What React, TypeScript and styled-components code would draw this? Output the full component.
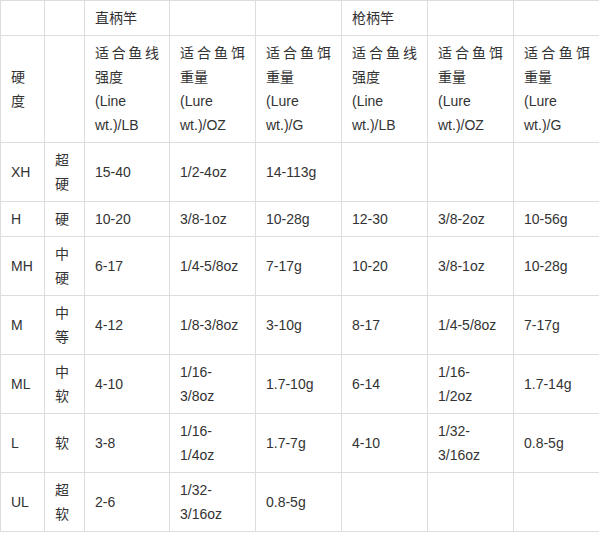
import React from "react";
import styled, { createGlobalStyle } from "styled-components";

const Global = createGlobalStyle`
  html, body { margin: 0; padding: 0; background: #fff; }
  body { font-family: "Liberation Sans", Arial, "Noto Sans CJK SC", sans-serif; }
`;

const Table = styled.table`
  border-collapse: collapse;
  table-layout: fixed;
  width: 600px;
  font-size: 14px;
  line-height: 24px;
  color: #333;
`;

const Cell = styled.td`
  border: 1px solid #ddd;
  padding: 5px 10px;
  vertical-align: middle;
  text-align: justify;
  word-wrap: break-word;
`;

const Zh = styled.span`
  display: block;
  text-align: justify;
`;

const widths = [44, 40, 85, 86, 86, 86, 86, 87];

const rows: string[][] = [
  ["XH", "超硬", "15-40", "1/2-4oz", "14-113g", "", "", ""],
  ["H", "硬", "10-20", "3/8-1oz", "10-28g", "12-30", "3/8-2oz", "10-56g"],
  ["MH", "中硬", "6-17", "1/4-5/8oz", "7-17g", "10-20", "3/8-1oz", "10-28g"],
  ["M", "中等", "4-12", "1/8-3/8oz", "3-10g", "8-17", "1/4-5/8oz", "7-17g"],
  ["ML", "中软", "4-10", "1/16-3/8oz", "1.7-10g", "6-14", "1/16-1/2oz", "1.7-14g"],
  ["L", "软", "3-8", "1/16-1/4oz", "1.7-7g", "4-10", "1/32-3/16oz", "0.8-5g"],
  ["UL", "超软", "2-6", "1/32-3/16oz", "0.8-5g", "", "", ""],
];

const head2: [string, string][] = [
  ["硬度", ""],
  ["", ""],
  ["适合鱼线强度", "(Line wt.)/LB"],
  ["适合鱼饵重量", "(Lure wt.)/OZ"],
  ["适合鱼饵重量", "(Lure wt.)/G"],
  ["适合鱼线强度", "(Line wt.)/LB"],
  ["适合鱼饵重量", "(Lure wt.)/OZ"],
  ["适合鱼饵重量", "(Lure wt.)/G"],
];

const head1 = ["", "", "直柄竿", "", "", "枪柄竿", "", ""];

export default function App() {
  return (
    <>
      <Global />
      <Table lang="zh-CN">
        <colgroup>
          {widths.map((w, i) => (
            <col key={i} style={{ width: w }} />
          ))}
        </colgroup>
        <tbody>
          <tr>
            {head1.map((t, i) => (
              <Cell key={i}>{t}</Cell>
            ))}
          </tr>
          <tr>
            {head2.map(([zh, en], i) => (
              <Cell key={i}>
                {zh && <Zh>{zh}</Zh>}
                {en}
              </Cell>
            ))}
          </tr>
          {rows.map((r, ri) => (
            <tr key={ri}>
              {r.map((t, i) => (
                <Cell key={i}>{t}</Cell>
              ))}
            </tr>
          ))}
        </tbody>
      </Table>
    </>
  );
}
